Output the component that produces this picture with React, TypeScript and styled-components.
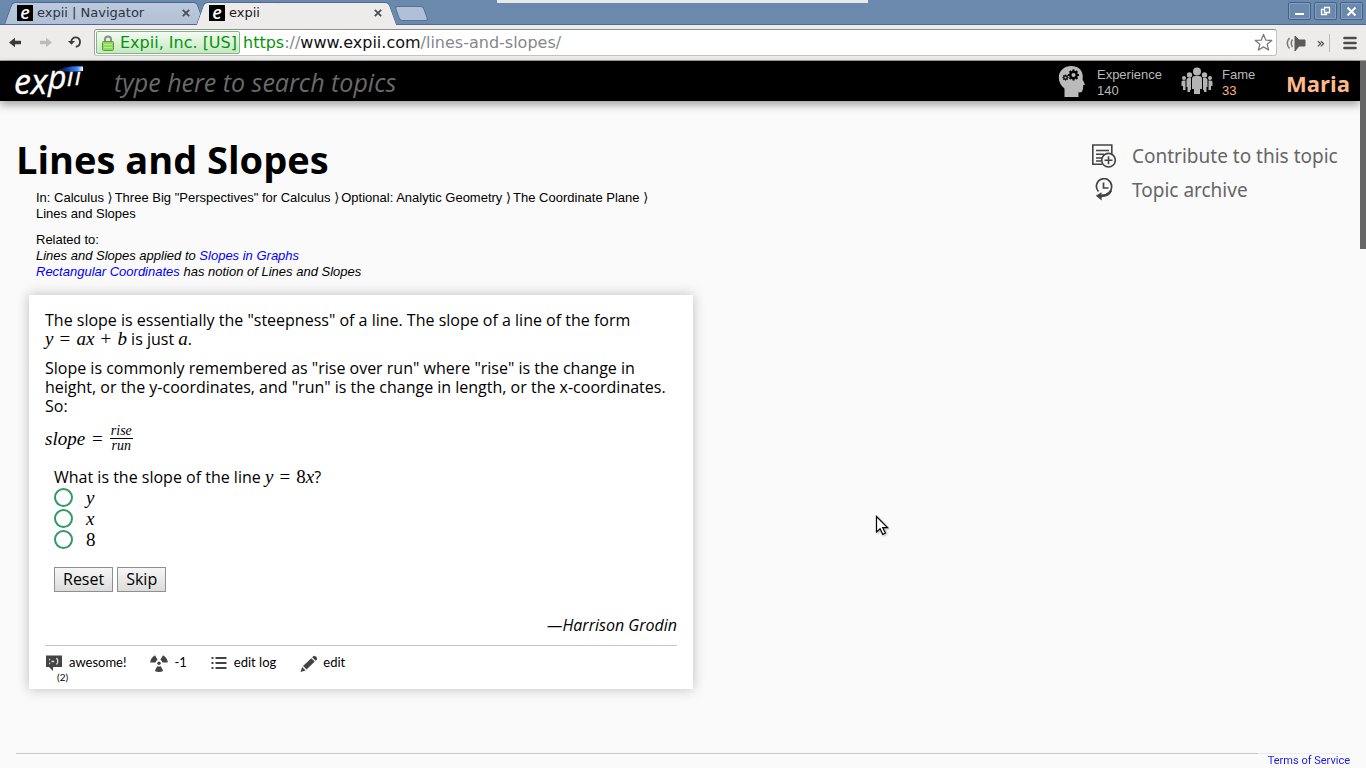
import React from "react";
import styled, { createGlobalStyle, css } from "styled-components";

const chromeFont = `"DejaVu Sans", sans-serif`;
const siteFont = `"Liberation Sans", Arial, sans-serif`;
const displayFont = `"Open Sans", "Noto Sans", sans-serif`;
const mathFont = `"Liberation Serif", "Times New Roman", serif`;
const smallFont = `Lato, sans-serif`;

const GlobalStyle = createGlobalStyle`
  *, *::before, *::after { box-sizing: border-box; }
  body { margin: 0; background: #fafafa; color: #000; font-family: ${siteFont}; }
  a { text-decoration: none; color: inherit; }
  h1, p { margin: 0; }
  button { font: inherit; }
`;

const Window = styled.div`
  position: relative;
  display: flex;
  flex-direction: column;
  min-height: 100vh;
`;

/* ---------- browser frame ---------- */

const TitleBar = styled.header`
  position: relative;
  display: flex;
  justify-content: space-between;
  height: 25px;
  padding: 2px 3px 0 8px;
  background: #6b89ad;
  border-bottom: 1px solid #4f6a92;
`;

const TopStrip = styled.div`
  position: absolute;
  top: 0;
  left: 497px;
  width: 371px;
  height: 3px;
  background: #e9e9e8;
`;

const TabStrip = styled.div`
  display: flex;
  align-items: flex-start;
`;

const Tab = styled.div<{ $active?: boolean }>`
  position: relative;
  display: flex;
  align-items: center;
  width: 192px;
  height: ${(p) => (p.$active ? 23 : 22)}px;
  padding: 0 10px 1px 9px;
  font: 13px/20px ${chromeFont};
  color: ${(p) => (p.$active ? "#1c1c1c" : "#2b3444")};
  z-index: ${(p) => (p.$active ? 2 : 1)};

  &::before,
  &::after {
    content: "";
    position: absolute;
    z-index: -1;
    top: 0;
    bottom: 0;
    width: 58%;
    border: 1px solid #4f6a92;
    border-bottom: 0;
    background: ${(p) =>
      p.$active ? "#edeceb" : "linear-gradient(#bccadc, #b1c0d5)"};
  }
  &::before {
    left: 0;
    border-right: 0;
    border-top-left-radius: 4px;
    transform: skewX(-20deg);
  }
  &::after {
    right: -1px;
    border-left: 0;
    border-top-right-radius: 4px;
    transform: skewX(20deg);
  }
`;

const Favicon = styled.span`
  width: 16px;
  height: 16px;
  margin-right: 4px;
  background: #000;
  color: #fff;
  font: italic 600 18px/14px ${displayFont};
  text-align: center;
`;

const TabTitle = styled.span`
  flex: 1;
  white-space: nowrap;
`;

const TabClose = styled.button`
  display: flex;
  padding: 0;
  border: 0;
  background: none;
  color: #4a4f57;
`;

const NewTab = styled.button`
  width: 29px;
  height: 15px;
  margin: 4px 0 0 5px;
  padding: 0;
  border: 1px solid #56719a;
  border-radius: 3px;
  background: #b0c0d6;
  transform: skewX(20deg);
`;

const WindowButtons = styled.div`
  display: flex;
  gap: 3px;
`;

const WindowButton = styled.button`
  display: flex;
  align-items: center;
  justify-content: center;
  width: 23px;
  height: 18px;
  padding: 0;
  border: 1px solid #41608a;
  border-radius: 2px;
  box-shadow: inset 0 0 0 1px #84a0c1;
  background: #6b89ad;
  color: #fff;
`;

const Toolbar = styled.div`
  display: flex;
  align-items: center;
  height: 36px;
  padding: 0 9px 0 7px;
  background: #edeceb;
  border-bottom: 1px solid #a2a1a0;
`;

const ToolButton = styled.button<{ $gap?: number }>`
  display: flex;
  padding: 0;
  margin-right: ${(p) => p.$gap ?? 0}px;
  border: 0;
  background: none;
  font: 14px/16px ${chromeFont};
  color: #333;
`;

const AddressBar = styled.div`
  display: flex;
  flex: 1;
  align-items: center;
  height: 27px;
  margin-right: 9px;
  padding: 0 3px 0 1px;
  border: 1px solid #c4c3c2;
  border-top-color: #8f8e8d;
  border-left-color: #a3a2a1;
  border-radius: 3px;
  background: #fff;
  font: 16px/20px ${chromeFont};
`;

const Certificate = styled.button`
  display: flex;
  align-items: center;
  gap: 6px;
  height: 23px;
  margin-right: 3px;
  padding: 0 2px 0 5px;
  border: 1px solid #7dbb7d;
  border-radius: 2px;
  background: linear-gradient(#f3faf2, #c6e8c4);
  color: #079407;
  white-space: nowrap;
`;

const Url = styled.div`
  flex: 1;
  color: #85888c;
  white-space: nowrap;
`;

const UrlScheme = styled.span`
  color: #079407;
`;

const UrlHost = styled.span`
  color: #111;
`;

const ToolDivider = styled.span`
  width: 1px;
  height: 18px;
  margin: 0 13px 0 3px;
  background: #bab9b8;
`;

/* ---------- site header ---------- */

const SiteHeader = styled.header`
  display: flex;
  align-items: center;
  height: 40px;
  margin-right: 6px;
  padding: 0 10px 0 13px;
  background: #000;
  box-shadow: 0 4px 8px rgba(0, 0, 0, 0.35);
`;

const LogoLink = styled.a`
  display: flex;
  margin-right: 27px;
`;

const Search = styled.input`
  flex: 1;
  min-width: 0;
  height: 40px;
  padding: 2px 0 0 2px;
  border: 0;
  outline: 0;
  background: transparent;
  color: #fff;
  font: italic 25px/36px ${displayFont};

  &::placeholder {
    color: #6a6a6a;
    opacity: 1;
  }
`;

const Stat = styled.div<{ $gap: number }>`
  display: flex;
  align-items: center;
  gap: ${(p) => p.$gap}px;
  margin-right: 17px;
`;

const StatText = styled.div`
  width: 67px;
  padding-top: 3px;
  color: #b9b9b9;
  font: 13px/16px ${siteFont};
`;

const StatValue = styled.div<{ $warm?: boolean }>`
  color: ${(p) => (p.$warm ? "#ffb37a" : "#b9b9b9")};
`;

const FameText = styled(StatText)`
  width: 47px;
`;

const UserName = styled.a`
  padding-top: 3px;
  color: #ffb98a;
  font: 700 22px/36px ${displayFont};
`;

/* ---------- page ---------- */

const Main = styled.main`
  display: flex;
  flex: 1;
  justify-content: space-between;
  padding: 38px 20px 0 16px;
`;

const Topic = styled.div`
  width: 677px;
`;

const Title = styled.h1`
  font: 700 38px/40px ${displayFont};
`;

const TopicMeta = styled.div`
  padding: 11px 20px 0;
  font: 13px/16px ${siteFont};
`;

const MetaBlock = styled.div<{ $italic?: boolean }>`
  font-style: ${(p) => (p.$italic ? "italic" : "normal")};
`;

const Breadcrumbs = styled.nav`
  margin-bottom: 10px;
`;

const Chevron = styled.span`
  margin-right: 2px;
  font-family: ${chromeFont};
  line-height: 1;
`;

const MetaLink = styled.a`
  color: #00f;
`;

const Card = styled.article`
  margin: 15px 0 0 13px;
  padding: 16px;
  background: #fff;
  box-shadow: 0 0 12px rgba(0, 0, 0, 0.25);
  font: 16px/19px ${displayFont};
`;

const Paragraph = styled.p`
  margin-bottom: 10px;
`;

const mathText = css`
  font-family: ${mathFont};
  font-size: 19px;
  line-height: 18px;
`;

const Math = styled.i`
  ${mathText}
`;

const MathNumber = styled.span`
  ${mathText}
`;

const MathOperator = styled.span`
  ${mathText}
  padding: 0 2px;
`;

const Formula = styled.div`
  display: flex;
  align-items: center;
  gap: 5px;
  height: 25px;
`;

const Fraction = styled.span`
  display: inline-flex;
  flex-direction: column;
  align-items: center;
  font: italic 14px/14px ${mathFont};
`;

const Numerator = styled.span`
  padding: 0 1px;
  border-bottom: 1px solid #000;
`;

const Quiz = styled.form`
  padding: 17px 9px 0;
`;

const Choice = styled.label`
  display: flex;
  align-items: center;
  gap: 13px;
  height: 21px;
`;

const Radio = styled.input`
  appearance: none;
  width: 19px;
  height: 19px;
  margin: 0;
  border: 2px solid #339966;
  border-radius: 50%;
  background: #fff;

  &:checked {
    box-shadow: inset 0 0 0 4px #fff;
    background: #339966;
  }
`;

const QuizButtons = styled.div`
  display: flex;
  gap: 4px;
  padding: 17px 0 24px;
`;

const QuizButton = styled.button`
  height: 25px;
  padding: 0 8px;
  border: 1px solid #8f8f8f;
  background: linear-gradient(#f6f6f6, #dcdcdc);
  color: #000;
`;

const Author = styled.p`
  padding-bottom: 10px;
  border-bottom: 1px solid #c9c9c9;
  font-style: italic;
  text-align: right;
`;

const Actions = styled.div`
  display: flex;
  align-items: flex-start;
  gap: 24px;
  height: 27px;
  padding-top: 7px;
`;

const Action = styled.button<{ $gap: number }>`
  display: flex;
  position: relative;
  gap: ${(p) => p.$gap}px;
  padding: 0;
  border: 0;
  background: none;
  color: #000;
  font: 13px/18px ${smallFont};
  white-space: nowrap;

  svg {
    margin-top: 2px;
  }
`;

const ActionCount = styled.small`
  position: absolute;
  top: 18px;
  left: 12px;
  font: 10px/12px ${smallFont};
`;

const TopicLinks = styled.nav`
  display: flex;
  flex-direction: column;
  width: 254px;
`;

const TopicLink = styled.a`
  display: flex;
  align-items: center;
  gap: 16px;
  height: 34px;
  color: #666;
  font: 19px/24px "Noto Sans", sans-serif;
  white-space: nowrap;
`;

const Footer = styled.footer`
  height: 15px;
  margin: 0 22px 0 16px;
  border-top: 1px solid #c8c8c8;
`;

const Terms = styled.a`
  position: fixed;
  right: 0;
  bottom: 0;
  height: 19px;
  padding: 5px 16px 0 10px;
  background: rgba(250, 250, 250, 0.7);
  color: #1a1ae8;
  font: 11px/13px Roboto, sans-serif;
`;

const ScrollThumb = styled.div`
  position: absolute;
  top: 61px;
  right: 0;
  width: 6px;
  height: 188px;
  background: #666;
`;

const Pointer = styled.svg`
  position: absolute;
  top: 515px;
  left: 875px;
  filter: drop-shadow(1px 1px 1px rgba(0, 0, 0, 0.3));
`;

/* ---------- drawings ---------- */

const CloseGlyph = () => (
  <svg width="8" height="8" viewBox="0 0 8 8" stroke="currentColor" strokeWidth="1.8">
    <path d="M.8.8l6.4 6.4M7.2.8L.8 7.2" />
  </svg>
);

const ArrowIcon = ({ back }: { back?: boolean }) => (
  <svg width="16" height="14" viewBox="0 0 16 14" fill={back ? "#3a3a3a" : "#bdbcbb"}>
    {back ? (
      <path d="M2 6.500l6-4.800v3.100h6v3.400H8v3.100z" />
    ) : (
      <path d="M14 6.500L8 1.700v3.100H2v3.400h6v3.100z" />
    )}
  </svg>
);

const ReloadIcon = () => (
  <svg width="16" height="16" viewBox="0 0 16 16" fill="none" stroke="#3a3a3a" strokeWidth="1.8">
    <path d="M4.200 7C4.400 3.800 6.800 2.200 9 2.400c2.600.2 4.200 2.300 4 4.800-.1 2.300-1.700 4.200-4.200 4.600" />
    <path d="M1 6h7L4.500 9.800z" fill="#3a3a3a" stroke="none" />
  </svg>
);

const LockIcon = () => (
  <svg width="12" height="16" viewBox="0 0 12 16">
    <path d="M3 8V4.500a3 3 0 0 1 6 0V8" fill="none" stroke="#8d8d8d" strokeWidth="2" />
    <rect x=".5" y="6.500" width="11" height="9" rx="1" fill="#8fdc5a" stroke="#5a9a3a" />
    <path d="M2 9.500h8M2 12.500h8" stroke="#b5ee8d" />
  </svg>
);

const StarIcon = () => (
  <svg width="19" height="19" viewBox="0 0 20 20" fill="#fff" stroke="#777" strokeWidth="1.300" strokeLinejoin="round">
    <path d="M10 1.500l2.400 5.900 6.300.4-4.900 4 1.600 6.200L10 14.600 4.600 18l1.600-6.200-4.900-4 6.300-.4z" />
  </svg>
);

const SpeakerIcon = () => (
  <svg width="20" height="18" viewBox="0 0 20 18">
    <path d="M9 2l4 4h6v6h-6l-4 5z" fill="#5b5b5b" stroke="#5b5b5b" />
    <path d="M6.500 5.500Q4 9 6.500 13M3.500 4Q-1 9 3.500 14.500" fill="none" stroke="#777" strokeWidth="1.500" />
  </svg>
);

const MenuIcon = () => (
  <svg width="14" height="14" viewBox="0 0 14 14" stroke="#4b4b4b" strokeWidth="2.600" strokeLinecap="round">
    <path d="M1.500 2h11M1.500 7h11M1.500 12h11" />
  </svg>
);

const Logo = () => (
  <svg width="72" height="64" viewBox="0 -13 72 64" role="img" aria-label="expii">
    <defs>
      <linearGradient id="comet" x1="0" x2="1">
        <stop offset="0" stopColor="#000" />
        <stop offset=".45" stopColor="#123f9c" />
        <stop offset=".8" stopColor="#3f8cff" />
        <stop offset="1" stopColor="#fff" />
      </linearGradient>
    </defs>
    <path d="M42 9Q54 3 70 4.500V9Q56 10 42 9z" fill="url(#comet)" />
    <g fill="#fff" stroke="#fff" strokeWidth=".4" fontFamily={displayFont} fontStyle="italic">
      <text x="1" y="32" fontSize="34">ex</text>
      <text x="35" y="27" fontSize="32">p</text>
      <text x="54" y="24" fontSize="25">ı</text>
      <text x="62" y="23" fontSize="23">ı</text>
    </g>
  </svg>
);

const Gear = ({ x, y, r }: { x: number; y: number; r: number }) => (
  <g transform={`translate(${x} ${y}) scale(${r})`}>
    <circle r=".58" fill="none" stroke="#000" strokeWidth=".42" />
    <path
      d="M0-1v.4M0 1V.6M-1 0h.4M1 0H.6M-.7-.7l.3.3M.7.7L.4.4M-.7.7l.3-.3M.7-.7l-.3.3"
      stroke="#000"
      strokeWidth=".4"
    />
  </g>
);

const HeadIcon = () => (
  <svg width="27" height="33" viewBox="0 0 27 33">
    <path
      d="M6.500 32V23.500C3 21 .8 17 .8 12.500.8 5.500 6.500 1 13.200 1 20 1 24.600 5 24.800 11.200L24.600 14.500 27 19.500 25 20.600 25.200 23 24.400 25.800C24 27.400 22.500 27.500 20.500 27.300V32z"
      fill="#bababa"
    />
    <Gear x={15.500} y={10} r={5.500} />
    <Gear x={7.500} y={12.500} r={3} />
  </svg>
);

const PeopleIcon = () => (
  <svg width="32" height="28" viewBox="0 0 32 28" fill="#b4b4b4">
    <circle cx="16" cy="4.500" r="4" />
    <path d="M11 12q0-3 3-3h4q3 0 3 3v10h-2v5h-6v-5h-2z" />
    <circle cx="8.500" cy="8" r="2.700" />
    <path d="M5.500 13q0-2 2-2H10v12h-1v2H6.500v-5h-1z" />
    <circle cx="23.500" cy="8" r="2.700" />
    <path d="M26.500 13q0-2-2-2H22v12h1v2h2.500v-5h1z" />
    <circle cx="3" cy="11" r="2" />
    <path d="M.5 15q0-1.500 1.500-1.500h2.500V23H2v-4H.5z" />
    <circle cx="29" cy="11" r="2" />
    <path d="M31.500 15q0-1.500-1.500-1.500h-2.500V23H30v-4h1.500z" />
  </svg>
);

const ContributeIcon = () => (
  <svg width="24" height="24" viewBox="0 0 24 24" fill="none" stroke="#444" strokeWidth="1.600">
    <path d="M10.500 20.300H.8V1h19v9.500M4 6.500h13M4 10.300h8M4 14h6M4 17h5" />
    <circle cx="16.500" cy="16.200" r="6.800" />
    <path d="M16.500 12.200v8M12.500 16.200h8" />
  </svg>
);

const ArchiveIcon = () => (
  <svg width="24" height="24" viewBox="0 0 24 24" fill="none" stroke="#444" strokeWidth="1.700">
    <path d="M6.500 13.500A7.600 7.600 0 1 1 19.600 9" />
    <path d="M11.500 4.500v5.500h5" />
    <path d="M19.600 9Q19.500 16.500 9.500 17.600" />
    <path d="M19 12.500Q16.500 18 9 18" strokeWidth="2.400" />
    <path d="M3.800 17.800l5.700-3.600.2 8.400z" fill="#444" stroke="none" />
  </svg>
);

const AwesomeIcon = () => (
  <svg width="17" height="16" viewBox="0 0 17 16">
    <path d="M1 .500h16v11.500H8v4l-4-4H1z" fill="#444" />
    <path d="M4 4.500h1.200M4 8.500h1.200M6.500 6.500h2.600M11.500 3q2.600 3.200 0 6.500" fill="none" stroke="#ddd" strokeWidth="1.300" />
  </svg>
);

const RadiationIcon = () => (
  <svg width="18" height="17" viewBox="0 0 18 17" fill="#444">
    <circle cx="9" cy="8.200" r="1.700" />
    <path d="M5 .2 7.600 4.800Q5.800 5.900 5.600 7.600H.2Q.4 2.800 5 .2zM13 .2 10.400 4.800Q12.200 5.900 12.400 7.600h5.400Q17.600 2.800 13 .2zM7.200 11.200Q9 12 10.800 11.200L13.200 16Q9 17.800 4.800 16z" />
  </svg>
);

const LogIcon = () => (
  <svg width="16" height="16" viewBox="0 0 16 16" stroke="#444" strokeWidth="1.800">
    <path d="M.5 3h2M4.500 3h11M.5 8h2M4.500 8h11M.5 13h2M4.500 13h11" />
  </svg>
);

const PencilIcon = () => (
  <svg width="18" height="18" viewBox="0 0 19 18" fill="#444">
    <path d="M.5 17.500L2.300 12.200 5.900 15.800zM3.200 11.200L11.900 2.800 15.600 6.400 6.900 14.900zM12.800 1.900 14 .8q1.200-1 2.400 0l1.300 1.300q1 1.200 0 2.300L16.500 5.500z" />
  </svg>
);

/* ---------- composition ---------- */

const crumbs = [
  "Calculus",
  "Three Big \"Perspectives\" for Calculus",
  "Optional: Analytic Geometry",
  "The Coordinate Plane",
];

const choices = [
  { value: "y", label: <Math>y</Math> },
  { value: "x", label: <Math>x</Math> },
  { value: "8", label: <MathNumber>8</MathNumber> },
];

export default function App() {
  return (
    <Window>
      <GlobalStyle />
      <TitleBar>
        <TabStrip>
          <Tab>
            <Favicon>e</Favicon>
            <TabTitle>expii | Navigator</TabTitle>
            <TabClose aria-label="Close tab"><CloseGlyph /></TabClose>
          </Tab>
          <Tab $active>
            <Favicon>e</Favicon>
            <TabTitle>expii</TabTitle>
            <TabClose aria-label="Close tab"><CloseGlyph /></TabClose>
          </Tab>
          <NewTab aria-label="New tab" />
        </TabStrip>
        <TopStrip />
        <WindowButtons>
          <WindowButton aria-label="Minimize">
            <svg width="11" height="11" viewBox="0 0 11 11"><path d="M1 7h9v2H1z" fill="#fff" /></svg>
          </WindowButton>
          <WindowButton aria-label="Restore">
            <svg width="11" height="11" viewBox="0 0 11 11" fill="none" stroke="#fff">
              <path d="M4.500 1.500h5v5h-5zM3.500 3.500h-2v5h5v-2" strokeWidth="1.300" />
            </svg>
          </WindowButton>
          <WindowButton aria-label="Close">
            <svg width="11" height="11" viewBox="0 0 11 11" stroke="#fff" strokeWidth="2"><path d="M1.500 1.500l8 8M9.500 1.500l-8 8" /></svg>
          </WindowButton>
        </WindowButtons>
      </TitleBar>

      <Toolbar>
        <ToolButton $gap={15} aria-label="Back"><ArrowIcon back /></ToolButton>
        <ToolButton $gap={13} aria-label="Forward"><ArrowIcon /></ToolButton>
        <ToolButton $gap={11} aria-label="Reload"><ReloadIcon /></ToolButton>
        <AddressBar>
          <Certificate><LockIcon />Expii, Inc. [US]</Certificate>
          <Url role="textbox" aria-label="Address">
            <UrlScheme>https</UrlScheme>://<UrlHost>www.expii.com</UrlHost>/lines-and-slopes/
          </Url>
          <ToolButton aria-label="Bookmark"><StarIcon /></ToolButton>
        </AddressBar>
        <ToolButton $gap={10} aria-label="Sound"><SpeakerIcon /></ToolButton>
        <ToolButton $gap={1} aria-label="More extensions">»</ToolButton>
        <ToolDivider />
        <ToolButton aria-label="Menu"><MenuIcon /></ToolButton>
      </Toolbar>

      <SiteHeader>
        <LogoLink href="#" aria-label="expii home"><Logo /></LogoLink>
        <Search aria-label="Search topics" placeholder="type here to search topics" />
        <Stat $gap={12}>
          <HeadIcon />
          <StatText>
            Experience
            <StatValue>140</StatValue>
          </StatText>
        </Stat>
        <Stat $gap={9}>
          <PeopleIcon />
          <FameText>
            Fame
            <StatValue $warm>33</StatValue>
          </FameText>
        </Stat>
        <UserName href="#">Maria</UserName>
      </SiteHeader>

      <Main>
        <Topic>
          <Title>Lines and Slopes</Title>
          <TopicMeta>
            <Breadcrumbs aria-label="Breadcrumb">
              In:{" "}
              {crumbs.map((name) => (
                <React.Fragment key={name}>
                  <a href="#">{name}</a> <Chevron>⟩</Chevron>
                  <wbr />
                </React.Fragment>
              ))}
              <br />
              <a href="#">Lines and Slopes</a>
            </Breadcrumbs>
            <MetaBlock>Related to:</MetaBlock>
            <MetaBlock $italic>
              Lines and Slopes applied to <MetaLink href="#">Slopes in Graphs</MetaLink>
            </MetaBlock>
            <MetaBlock $italic>
              <MetaLink href="#">Rectangular Coordinates</MetaLink> has notion of Lines and Slopes
            </MetaBlock>
          </TopicMeta>

          <Card>
            <Paragraph>
              The slope is essentially the "steepness" of a line. The slope of a line of the form{" "}
              <br />
              <Math>y</Math> <MathOperator>=</MathOperator> <Math>ax</Math>{" "}
              <MathOperator>+</MathOperator> <Math>b</Math> is just <Math>a</Math>.
            </Paragraph>
            <Paragraph>
              Slope is commonly remembered as "rise over run" where "rise" is the change in
              <br />
              height, or the y-coordinates, and "run" is the change in length, or the x-coordinates.
              <br />
              So:
            </Paragraph>
            <Formula>
              <Math>slope</Math>
              <MathOperator>=</MathOperator>
              <Fraction>
                <Numerator>rise</Numerator>
                <span>run</span>
              </Fraction>
            </Formula>

            <Quiz onSubmit={(e) => e.preventDefault()}>
              <p>
                What is the slope of the line <Math>y</Math> <MathOperator>=</MathOperator>{" "}
                <MathNumber>8</MathNumber>
                <Math>x</Math>?
              </p>
              {choices.map((c) => (
                <Choice key={c.value}>
                  <Radio type="radio" name="slope" value={c.value} />
                  {c.label}
                </Choice>
              ))}
              <QuizButtons>
                <QuizButton type="reset">Reset</QuizButton>
                <QuizButton type="button">Skip</QuizButton>
              </QuizButtons>
            </Quiz>

            <Author>—Harrison Grodin</Author>
            <Actions>
              <Action $gap={7}>
                <AwesomeIcon />
                awesome!
                <ActionCount>(2)</ActionCount>
              </Action>
              <Action $gap={6}><RadiationIcon />-1</Action>
              <Action $gap={7}><LogIcon />edit log</Action>
              <Action $gap={5}><PencilIcon />edit</Action>
            </Actions>
          </Card>
        </Topic>

        <TopicLinks aria-label="Topic tools">
          <TopicLink href="#"><ContributeIcon />Contribute to this topic</TopicLink>
          <TopicLink href="#"><ArchiveIcon />Topic archive</TopicLink>
        </TopicLinks>
      </Main>

      <Footer />
      <Terms href="#">Terms of Service</Terms>
      <ScrollThumb />
      <Pointer width="14" height="22" viewBox="0 0 14 22">
        <path
          d="M1.500 1.500v15.500l3.600-3.300 2.700 5.700 2.600-1.300-2.700-5.400h4.800z"
          fill="#fff"
          stroke="#000"
          strokeWidth="1.200"
        />
      </Pointer>
    </Window>
  );
}
